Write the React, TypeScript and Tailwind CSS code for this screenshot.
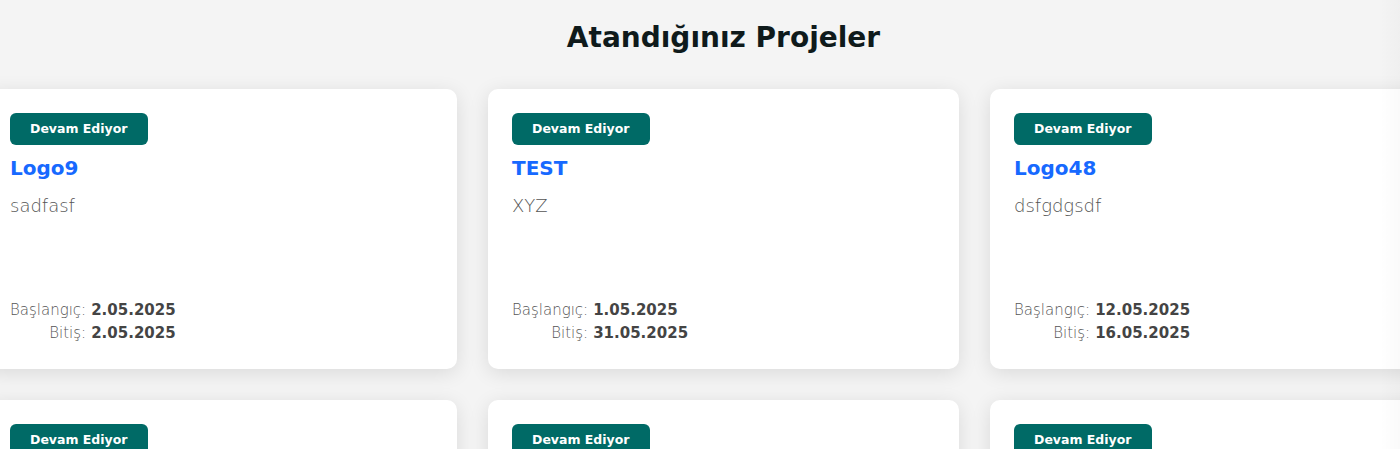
import React from 'react';

type Project = {
  name: string;
  description: string;
  start: string;
  end: string;
};

const projects: Project[] = [
  { name: 'Logo9', description: 'sadfasf', start: '2.05.2025', end: '2.05.2025' },
  { name: 'TEST', description: 'XYZ', start: '1.05.2025', end: '31.05.2025' },
  { name: 'Logo48', description: 'dsfgdgsdf', start: '12.05.2025', end: '16.05.2025' },
  { name: 'Logo12', description: 'asdasd', start: '3.05.2025', end: '9.05.2025' },
  { name: 'Deneme', description: 'qwe', start: '5.05.2025', end: '20.05.2025' },
  { name: 'Logo50', description: 'fghfgh', start: '14.05.2025', end: '28.05.2025' },
];

const ProjectCard = ({ project }: { project: Project }) => (
  <div className="flex h-[280px] flex-col rounded-[10px] bg-white p-6 shadow-[0_4px_20px_rgba(0,0,0,0.11)]">
    <span className="inline-flex h-8 w-fit items-center rounded-md bg-[#006a66] px-5 text-[12.5px] font-semibold text-white">
      Devam Ediyor
    </span>
    <h3 className="mt-[9px] text-[20px] leading-7 font-bold text-[#1769ff]">{project.name}</h3>
    <p className="mt-[11px] text-[18px] leading-[26px] font-light text-[#555]">{project.description}</p>
    <div className="mt-auto grid w-fit grid-cols-[auto_auto] gap-x-[5px] text-[15px] leading-[23px] text-[#555]">
      <span className="text-right font-light">Başlangıç:</span>
      <span className="font-bold text-[#444]">{project.start}</span>
      <span className="text-right font-light">Bitiş:</span>
      <span className="font-bold text-[#444]">{project.end}</span>
    </div>
  </div>
);

export default function App() {
  return (
    <div className="relative min-h-screen overflow-hidden bg-[#f4f4f4] font-['DejaVu_Sans',sans-serif]">
      <div className="ml-[-14px] w-[1475px] pt-5">
        <h1 className="text-center text-[28px] leading-9 font-semibold text-[#0f1a1b]">Atandığınız Projeler</h1>
        <div className="mt-[33px] grid grid-cols-3 gap-[31px]">
          {projects.map((p) => (
            <ProjectCard key={p.name} project={p} />
          ))}
        </div>
      </div>
      {/* faint scroll fade on the right edge */}
      <div className="pointer-events-none absolute inset-y-0 right-0 w-5 bg-gradient-to-r from-transparent to-black/[0.02]" />
    </div>
  );
}
